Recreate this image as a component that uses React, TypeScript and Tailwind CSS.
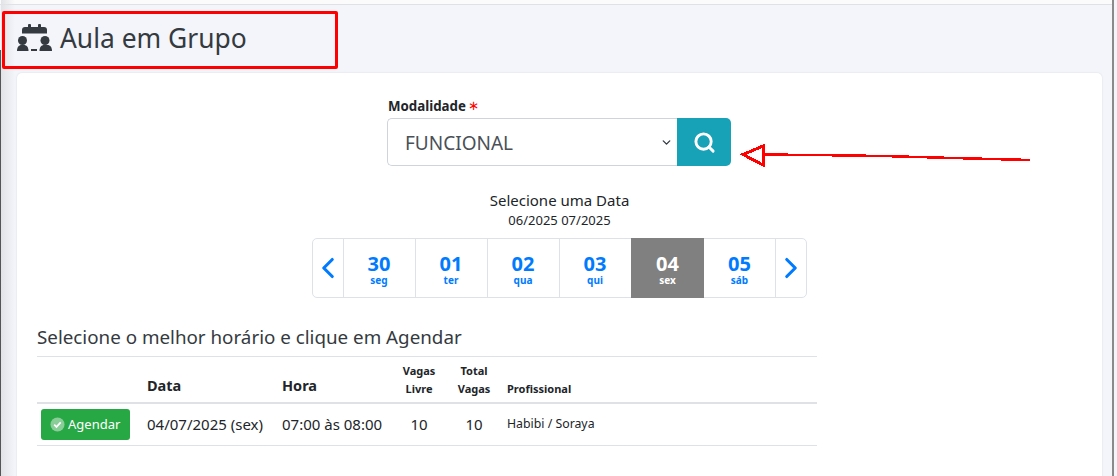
import { ChevronDown, ChevronLeft, ChevronRight, Search } from "lucide-react";

const days = [
  { day: "30", week: "seg" },
  { day: "01", week: "ter" },
  { day: "02", week: "qua" },
  { day: "03", week: "qui" },
  { day: "04", week: "sex", active: true },
  { day: "05", week: "sáb" },
];

function GroupIcon() {
  return (
    <svg viewBox="0 0 35 27" className="w-[35px] h-[27px] text-[#343a40]" fill="currentColor">
      <rect x="11" y="0" width="3" height="5" rx="1" />
      <rect x="21" y="0" width="3" height="5" rx="1" />
      <path d="M5 6a3 3 0 0 1 3-3h19a3 3 0 0 1 3 3v3.500H5z" />
      <circle cx="5.500" cy="16.500" r="4.500" />
      <circle cx="28" cy="16.500" r="4.500" />
      <path d="M0 27c0-4 2-6 4.500-6h2.500c2.500 0 4.500 2 4.500 6z" />
      <path d="M22.500 27c0-4 2-6 4.500-6h3.500c2.500 0 4.500 2 4.500 6z" />
      <rect x="14" y="25" width="6" height="2" />
    </svg>
  );
}

function CheckIcon() {
  return (
    <svg viewBox="0 0 16 16" className="w-[15px] h-[15px]">
      <circle cx="8" cy="8" r="7.500" fill="#fff" fillOpacity="0.45" />
      <path d="M4.500 8.200l2.400 2.400 4.500-4.800" fill="none" stroke="#fff" strokeWidth="1.800" />
    </svg>
  );
}

export default function App() {
  return (
    <div className="relative w-[1117px] h-[476px] overflow-hidden bg-[#f3f5fa] font-['Noto_Sans','Open_Sans',sans-serif] text-[#212529]">
      <div className="h-[5px] bg-[#fbfbfc] border-b border-[#dfe1e6]"></div>

      <div className="flex items-center h-[68px] pl-[17px] pb-[3px] gap-[8px]">
        <GroupIcon />
        <h3 className="pt-[2px] text-[26.400px] leading-none text-[#343a40]">Aula em Grupo</h3>
      </div>

      <div className="ml-[17px] w-[1085px] h-[420px] bg-white rounded-t-[5px] pt-[24px] px-[20px] shadow-[0_0_2px_rgba(0,0,0,0.12)]">
        <div className="w-[344px] ml-[350px]">
          <label className="flex h-[18px] items-center gap-[2px] pl-px text-[13.300px] leading-[18px] font-bold">
            Modalidade
            <span className="text-[#ff0000] font-normal leading-none font-['DejaVu_Sans',sans-serif]">∗</span>
          </label>
          <div className="flex h-[48px] mt-[3px]">
            <div className="flex-1 flex items-center justify-between pl-[17px] pr-[4px] border border-[#ced4da] border-r-0 rounded-l-[5px] text-[#495057] text-[19px]">
              <span className="pt-[2px]">FUNCIONAL</span>
              <ChevronDown className="w-[13px] h-[13px] text-[#343a40]" strokeWidth={2.5} />
            </div>
            <button className="w-[54px] flex items-center justify-center bg-[#17a2b8] rounded-r-[5px] text-white">
              <Search className="w-[23px] h-[23px]" strokeWidth={3} />
            </button>
          </div>
        </div>

        <div className="mt-[24px] text-center text-[15px] leading-[20px]">Selecione uma Data</div>
        <div className="mt-px text-center text-[13px] leading-[19px]">06/2025 07/2025</div>

        <div className="flex w-[495px] h-[60px] ml-[275px] mt-[8px] border border-[#dee2e6] rounded-[5px] text-[#007bff]">
          <div className="w-[30px] shrink-0 flex items-center justify-center">
            <ChevronLeft className="w-[34px] h-[34px] shrink-0" strokeWidth={2.200} />
          </div>
          {days.map((d) => (
            <div
              key={d.day}
              className={
                d.active
                  ? "w-[73px] shrink-0 -my-px flex flex-col items-center justify-center bg-[#808080] text-white"
                  : d.week === "sáb"
                    ? "w-[71px] shrink-0 flex flex-col items-center justify-center"
                    : "w-[72px] shrink-0 flex flex-col items-center justify-center border-l border-[#dee2e6] pr-px"
              }
            >
              <span className="mt-[3px] text-[20px] leading-[22px] font-bold">{d.day}</span>
              <span className="text-[10px] leading-[11px] font-bold">{d.week}</span>
            </div>
          ))}
          <div className="w-[31px] min-w-0 flex items-center justify-center border-l border-[#dee2e6]">
            <ChevronRight className="w-[34px] h-[34px] shrink-0" strokeWidth={2.200} />
          </div>
        </div>

        <h5 className="mt-[25px] text-[18.800px] leading-[28px] text-[#343a40]">Selecione o melhor horário e clique em Agendar</h5>

        <table className="w-[780px] mt-[5px] table-fixed border-collapse">
          <colgroup>
            <col className="w-[106px]" />
            <col className="w-[135px]" />
            <col className="w-[117px]" />
            <col className="w-[48px]" />
            <col className="w-[62px]" />
            <col />
          </colgroup>
          <thead>
            <tr className="h-[46px] border-t border-[#dee2e6] border-b-2 align-bottom">
              <th></th>
              <th className="px-[4px] pb-[7px] text-left text-[14.500px] leading-[20px]">Data</th>
              <th className="px-[4px] pb-[7px] text-left text-[14.500px] leading-[20px]">Hora</th>
              <th className="pb-[4px] text-center text-[11px] leading-[18px]">Vagas<br />Livre</th>
              <th className="pb-[4px] text-center text-[11px] leading-[18px]">Total<br />Vagas</th>
              <th className="px-[2px] pb-[4px] text-left text-[11px] leading-[18px]">Profissional</th>
            </tr>
          </thead>
          <tbody>
            <tr className="h-[43px] border-b border-[#dee2e6]">
              <td className="px-[4px]">
                <button className="flex items-center gap-[3px] h-[31px] w-[89px] pl-[9px] bg-[#28a745] rounded-[3px] text-white text-[13px]">
                  <CheckIcon />
                  Agendar
                </button>
              </td>
              <td className="px-[4px] text-[15px]">04/07/2025 (sex)</td>
              <td className="px-[4px] text-[15px]">07:00 às 08:00</td>
              <td className="text-center text-[15px]">10</td>
              <td className="text-center text-[15px]">10</td>
              <td className="px-[2px] text-[12.300px]">Habibi / Soraya</td>
            </tr>
          </tbody>
        </table>
      </div>

      {/* borda da janela */}
      <div className="absolute left-0 top-[50px] bottom-0 w-[1px] bg-[#555]"></div>
      <div className="absolute left-[1px] top-0 bottom-0 w-[14px] bg-gradient-to-r from-[#e2e3e6] to-transparent"></div>
      <div className="absolute right-[3px] top-0 bottom-0 w-[2px] bg-[#8a8a8a]"></div>
      <div className="absolute right-0 top-0 bottom-0 w-[3px] bg-[#f3f5fa]"></div>

      {/* marcas vermelhas por cima do print */}
      <div className="absolute left-[2px] top-[11px] w-[336px] h-[58px] border-[3px] border-[#ff0000] rounded-[2px]"></div>
      <svg className="absolute left-[735px] top-[140px]" width="300" height="30" fill="none" stroke="#ff0000" strokeWidth="2.500" shapeRendering="crispEdges">
        <path d="M8 14.500L28 6v19z" strokeWidth="3" />
        <path d="M28 14.500L78 15l70 1 70 2 77 2" />
      </svg>
    </div>
  );
}
